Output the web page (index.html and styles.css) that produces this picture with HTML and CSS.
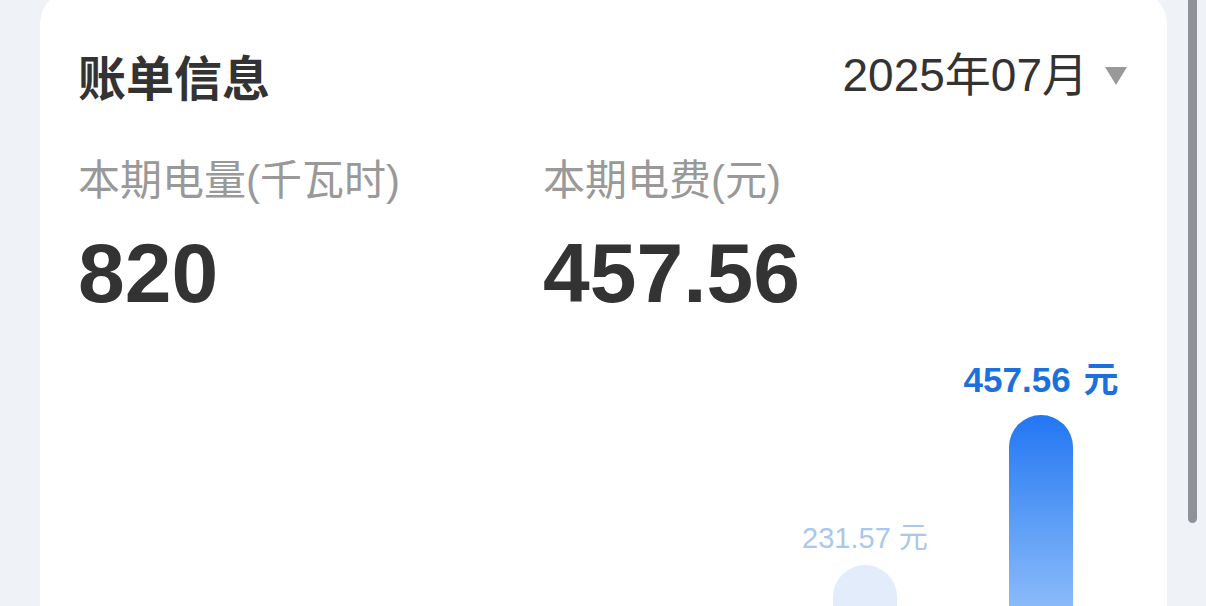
FILE: index.html
```html
<!DOCTYPE html>
<html lang="zh-CN">
<head>
<meta charset="UTF-8" />
<meta name="viewport" content="width=device-width, initial-scale=1" />
<title>账单信息</title>
<link rel="stylesheet" href="styles.css">
</head>
<body>

<div class="page">
  <!-- Bill card -->
  <section class="bill-card">
    <div class="bill-head">
      <h2 class="bill-title">账单信息</h2>
      <div class="month-picker">
        <span>2025年07月</span>
        <i class="caret"></i>
      </div>
    </div>

    <div class="bill-stats">
      <div class="stat">
        <div class="stat-label">本期电量(千瓦时)</div>
        <div class="stat-value">820</div>
      </div>
      <div class="stat">
        <div class="stat-label">本期电费(元)</div>
        <div class="stat-value">457.56</div>
      </div>
    </div>

    <!-- Monthly fee bars -->
    <div class="chart">
      <div class="chart-col">
        <div class="chart-label">231.57 元</div>
        <div class="chart-bar" style="height: 56px"></div>
      </div>
      <div class="chart-col current">
        <div class="chart-label">457.56 元</div>
        <div class="chart-bar" style="height: 206px"></div>
      </div>
    </div>
  </section>
</div>

<div class="scroll-thumb"></div>

</body>
</html>
```

FILE: styles.css
```css
/* --- Reset --- */
* {
  box-sizing: border-box;
}
body {
  margin: 0;
  height: 606px;
  overflow: hidden;
  background: #eff2f7;
  font-family: "Liberation Sans", "Noto Sans CJK SC", sans-serif;
  color: #333;
}

.page {
  padding: 0 39px 0 40px;
  width: 1206px;
}

/* --- Card --- */
.bill-card {
  width: 1127px;
  margin-top: -10px;
  padding: 58px 40px 60px 38px;
  background: #fff;
  border-radius: 34px;
}

.bill-head {
  display: flex;
  justify-content: space-between;
  align-items: center;
  height: 55px;
}
.bill-title {
  margin: 0;
  font-family: "Noto Sans CJK SC", sans-serif;
  font-size: 48px;
  font-weight: 700;
  line-height: 55px;
  color: #333;
}
.month-picker {
  display: flex;
  align-items: center;
  font-size: 46px;
  line-height: 55px;
  color: #333;
}
.caret {
  margin-left: 17px;
  width: 0;
  height: 0;
  border-left: 11px solid transparent;
  border-right: 11px solid transparent;
  border-top: 18px solid #999;
}

/* --- Stats --- */
.bill-stats {
  display: flex;
  margin-top: 53px;
}
.stat {
  width: 465px;
}
.stat-label {
  font-size: 42px;
  line-height: 50px;
  color: #999;
}
.stat-value {
  margin-top: 26px;
  font-size: 84px;
  font-weight: 700;
  line-height: 82px;
  color: #333;
}

/* --- Chart --- */
.chart {
  display: flex;
  justify-content: flex-end;
  align-items: flex-end;
  gap: 26px;
  padding-right: 11px;
  margin-top: 48px;
}
.chart-col {
  width: 150px;
  display: flex;
  flex-direction: column;
  align-items: center;
}
.chart-label {
  white-space: nowrap;
  font-size: 29px;
  line-height: 34px;
  color: #a9c8ec;
  margin-bottom: 10px;
}
.chart-bar {
  width: 64px;
  border-radius: 32px 32px 0 0;
  background: #e3ecfa;
}
.chart-col.current .chart-label {
  font-size: 35px;
  font-weight: 700;
  line-height: 36px;
  color: #1c70dc;
  margin-bottom: 17px;
  word-spacing: 3px;
}
.chart-col.current .chart-bar {
  background: linear-gradient(180deg, #2276f3 0%, #5a9cf6 50%, #92bff9 100%);
}

/* Scrollbar thumb over the page edge */
.scroll-thumb {
  position: fixed;
  top: -10px;
  left: 1188px;
  width: 9px;
  height: 533px;
  border-radius: 5px;
  background: #8f9299;
}
```
